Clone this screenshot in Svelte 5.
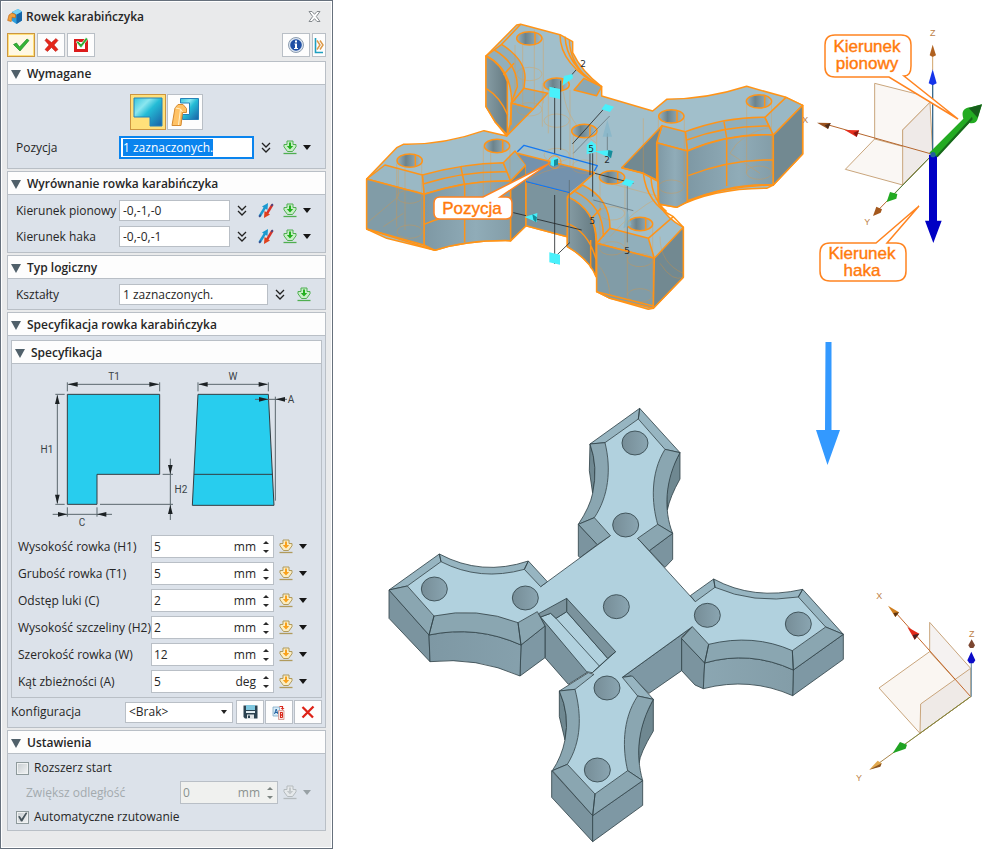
<script lang="ts">
	import { onMount } from 'svelte';

	let open = $state({ required: true, align: true, logic: true, spec: true, inner: true, settings: true });
	let position = $state('1 zaznaczonych.');
	let shapes = $state('1 zaznaczonych.');
	let directions = $state([
		{ id: 'vertical', label: 'Kierunek pionowy', value: '-0,-1,-0' },
		{ id: 'hook', label: 'Kierunek haka', value: '-0,-0,-1' }
	]);
	let params = $state([
		{ id: 'h1', label: 'Wysokość rowka (H1)', value: '5', unit: 'mm' },
		{ id: 't1', label: 'Grubość rowka (T1)', value: '5', unit: 'mm' },
		{ id: 'c', label: 'Odstęp luki (C)', value: '2', unit: 'mm' },
		{ id: 'h2', label: 'Wysokość szczeliny (H2)', value: '2', unit: 'mm' },
		{ id: 'w', label: 'Szerokość rowka (W)', value: '12', unit: 'mm' },
		{ id: 'a', label: 'Kąt zbieżności (A)', value: '5', unit: 'deg' }
	]);
	let extend = $state({ id: 'distance', label: 'Zwiększ odległość', value: '0', unit: 'mm' });
	let extendStart = $state(false);
	let autoProject = $state(true);
	let mode = $state('slot');

	const topHoles = [[88, 85], [170, 224], [253, 363], [336, 502], [420, 642], [514, 319], [777, 274], [-271, 452], [-9, 408]];
	const resultHoles = [[285, 129], [257, 375], [229, 620], [201, 864], [172, 1110], [502, 646], [775, 672], [-317, 567], [-44, 594]];

	let positionInput: HTMLInputElement;

	onMount(() => {
		positionInput.focus();
		positionInput.select();
	});

	function step(param: { value: string }, by: number) {
		param.value = String(Number(param.value) + by);
	}
</script>

{#snippet sectionHead(title: string, key: keyof typeof open)}
	<h2 class="section__head">
		<button type="button" class="section__toggle" aria-expanded={open[key]} onclick={() => (open[key] = !open[key])}>
			<svg class:closed={!open[key]} width="10" height="9" viewBox="0 0 10 9" aria-hidden="true"><path d="M0 0h10L5 9z" fill="#50606a" /></svg>
			{title}
		</button>
	</h2>
{/snippet}

{#snippet chevrons()}
	<button type="button" class="tool" aria-label="Więcej">
		<svg width="10" height="12" viewBox="0 0 10 12"><path d="M1 1l4 4 4-4M1 6l4 4 4-4" fill="none" stroke="#222" stroke-width="1.3" /></svg>
	</button>
{/snippet}

{#snippet swap()}
	<button type="button" class="tool" aria-label="Odwróć kierunek">
		<svg width="16" height="15" viewBox="0 0 16 15">
			<path d="M1.500 13.500L7 4.500" stroke="#1c9ad0" stroke-width="2.400" /><path d="M10 0l-.5 7-5.500-3.400z" fill="#1c9ad0" />
			<path d="M14.500 1.500L9 10.500" stroke="#d8332a" stroke-width="2.400" /><path d="M6 15l.5-7 5.500 3.400z" fill="#e0401c" />
			<path d="M1.200 14l1.500-2.300M14.800 1l-1.500 2.200" stroke="#3c4a8c" stroke-width="1.500" />
		</svg>
	</button>
{/snippet}

{#snippet pick(line: string, light: string, core: string, disabled = false)}
	<button type="button" class="tool" aria-label="Wstaw wartość" {disabled}>
		<svg width="14" height="15" viewBox="0 0 14 15">
			<path d="M4 1h6v3.500h3v2.300L9.500 11.500h-5L1 6.800V4.500h3z" fill={light} stroke={line} />
			<path d="M6 2.500h2V6h2.200L7 9.600 3.800 6H6z" fill={core} />
			<path d="M.5 13.500h13" stroke={line} stroke-width="1.300" />
		</svg>
	</button>
{/snippet}

{#snippet caret(fill = '#161616', disabled = false)}
	<button type="button" class="tool tool--caret" aria-label="Rozwiń" {disabled}>
		<svg width="8" height="5" viewBox="0 0 8 5"><path d="M0 0h8L4 5z" {fill} /></svg>
	</button>
{/snippet}

{#snippet spin(param: { id: string; value: string; unit: string }, disabled = false)}
	<span class="spin" class:spin--off={disabled}>
		<input id={param.id} type="text" inputmode="decimal" bind:value={param.value} {disabled} />
		<span class="spin__unit">{param.unit}</span>
		<span class="spin__arrows">
			<button type="button" aria-label="Zwiększ" {disabled} onclick={() => step(param, 1)}>
				<svg width="6" height="3" viewBox="0 0 6 3"><path d="M0 3h6L3 0z" fill="currentColor" /></svg>
			</button>
			<button type="button" aria-label="Zmniejsz" {disabled} onclick={() => step(param, -1)}>
				<svg width="6" height="3" viewBox="0 0 6 3"><path d="M0 0h6L3 3z" fill="currentColor" /></svg>
			</button>
		</span>
	</span>
{/snippet}

<main class="page">
	<form class="panel" onsubmit={(e) => e.preventDefault()}>
		<header class="title">
			<svg width="17" height="17" viewBox="0 0 17 17" aria-hidden="true">
				<path d="M5 4l6-3L15 3.500v9L9.500 16 5 13z" fill="#2d9fdc" />
				<path d="M9.500 6.500L15 3.500v9L9.500 16z" fill="#1766a8" />
				<path d="M5 4l6-3L15 3.500 9.500 6.500z" fill="#7bd3f4" />
				<path d="M.7 12.500L2 7l3-2 3.500 1.500v3.300L6 9.500 5 9l-.8 4.500z" fill="#f0a03c" stroke="#c46a14" stroke-width=".7" />
			</svg>
			<h1>Rowek karabińczyka</h1>
			<button type="button" class="title__close" aria-label="Zamknij">
				<svg width="13" height="11" viewBox="0 0 13 11"><path d="M1 .5h3l2.500 2.800L9 .5h3L8.300 5.500l3.700 5H9L6.500 7.700 4 10.500H1l3.700-5z" fill="#fff" stroke="#858a8e" /></svg>
			</button>
		</header>

		<div class="toolbar">
			<button type="submit" class="btn btn--active" aria-label="OK">
				<svg width="18" height="14" viewBox="0 0 18 14"><path d="M1.500 6.500l3-1.500 3 4L15 1l2 1.500L8 13z" fill="#35b536" stroke="#208a27" stroke-width=".7" /></svg>
			</button>
			<button type="button" class="btn" aria-label="Anuluj">
				<svg width="15" height="14" viewBox="0 0 15 14"><path d="M2.500.5l5 4 4.500-4L14 2.500 10 7l4 4.500-2.500 2-4-4-4 4L1 11.500 5 7 1 2.500z" fill="#e5271b" stroke="#b31610" stroke-width=".5" /></svg>
			</button>
			<button type="button" class="btn" aria-label="Zastosuj">
				<svg width="16" height="16" viewBox="0 0 16 16">
					<path d="M2.500 3.500h11v10h-11z" fill="#fff" stroke="#dc1c1c" stroke-width="3" />
					<path d="M3 5l2-1 3 3 5-6.500 2 1.500-7 9z" fill="#2fae35" stroke="#fff" stroke-width=".6" />
				</svg>
			</button>
			<button type="button" class="btn btn--info" aria-label="Informacje">
				<svg width="18" height="18" viewBox="0 0 18 18">
					<circle cx="9" cy="9" r="7.500" fill="#dce6f2" stroke="#8d9db0" />
					<circle cx="9" cy="9" r="5.800" fill="#1f4fa5" />
					<path d="M7.500 7.500H10v4.500h1v1H7v-1h1V8.500h-.500zM8 4.500h2v2H8z" fill="#fff" />
				</svg>
			</button>
			<button type="button" class="btn btn--narrow" aria-label="Podgląd">
				<svg width="10" height="17" viewBox="0 0 10 17">
					<path d="M1.500 1v14.500H9" fill="none" stroke="#1e9fc0" stroke-width="1.600" />
					<path d="M3 3.500l3 4.500-3 4.500M6 3.500L9 8l-3 4.500" fill="none" stroke="#dc9a4a" stroke-width="1.500" />
				</svg>
			</button>
		</div>

		<section class="section">
			{@render sectionHead('Wymagane', 'required')}
			{#if open.required}
				<div class="section__body section__body--required">
					<div class="modes">
						<button type="button" class="mode" class:mode--active={mode === 'slot'} aria-label="Rowek" onclick={() => (mode = 'slot')}>
							<svg width="30" height="30" viewBox="0 0 30 30">
								<defs><linearGradient id="block" x1="0" y1="0" x2="1" y2="1"><stop offset="0" stop-color="#35c5dc" /><stop offset=".3" stop-color="#8be6ef" /><stop offset=".5" stop-color="#24bcd6" /><stop offset="1" stop-color="#1a5fa5" /></linearGradient></defs>
								<path d="M1 1h28v28H17v-9H1z" fill="url(#block)" stroke="#2682b8" />
							</svg>
						</button>
						<button type="button" class="mode" class:mode--active={mode === 'hook'} aria-label="Hak" onclick={() => (mode = 'hook')}>
							<svg width="30" height="30" viewBox="0 0 30 30">
								<path d="M10.500 1.500h18v21H12.500v-5h7V6h-9z" fill="url(#block)" stroke="#2682b8" />
								<path d="M2 28.500L5 11l3-3.500h5l3.500 4v4h-4L11 28.500z" fill="#ffc265" stroke="#d58a30" />
								<path d="M5.500 11l5 1 2 3M10.500 12L8.500 28" fill="none" stroke="#fff0c8" />
							</svg>
						</button>
					</div>
					<div class="row row--tall">
						<label for="position">Pozycja</label>
						<input id="position" type="text" bind:value={position} bind:this={positionInput} />
						{@render chevrons()}
						{@render pick('#4fae50', '#c9efc8', '#23b01e')}
						{@render caret()}
					</div>
				</div>
			{/if}
		</section>

		<section class="section">
			{@render sectionHead('Wyrównanie rowka karabińczyka', 'align')}
			{#if open.align}
				<div class="section__body section__body--align">
					{#each directions as dir (dir.id)}
						<div class="row">
							<label for={dir.id}>{dir.label}</label>
							<input id={dir.id} type="text" bind:value={dir.value} />
							{@render chevrons()}
							{@render swap()}
							{@render pick('#4fae50', '#c9efc8', '#23b01e')}
							{@render caret()}
						</div>
					{/each}
				</div>
			{/if}
		</section>

		<section class="section">
			{@render sectionHead('Typ logiczny', 'logic')}
			{#if open.logic}
				<div class="section__body section__body--logic">
					<div class="row row--wide">
						<label for="shapes">Kształty</label>
						<input id="shapes" type="text" bind:value={shapes} />
						{@render chevrons()}
						{@render pick('#4fae50', '#c9efc8', '#23b01e')}
					</div>
				</div>
			{/if}
		</section>

		<section class="section">
			{@render sectionHead('Specyfikacja rowka karabińczyka', 'spec')}
			{#if open.spec}
				<div class="section__body section__body--spec">
					<section class="section section--inner">
						{@render sectionHead('Specyfikacja', 'inner')}
						{#if open.inner}
							<div class="section__body section__body--params">
								<svg class="diagram" viewBox="12 364 309 171" role="img" aria-label="Wymiary rowka">
									<g transform="translate(0 340) scale(.33333)" stroke="#333b40" stroke-width="3">
										<path d="M202 163H479V403H291V493H202z" fill="#28cdee" />
										<path d="M594 163H805L822 496H577zM582 403H818" fill="#28cdee" />
										<path d="M202 127V154M479 127V154M205 133H476M166 163H194M166 493H194M172 166V490M202 502V530M291 502V530M158 523H336M300 493H519M488 403H519M511 356V540M594 127V154M805 127V154M597 133H802M765 178H861M826 170V482" fill="none" stroke="#59656b" />
										<path d="M203 133l30-7v14zM478 133l-30-7v14zM172 164l-7 28h14zM172 492l-7-28h14zM202 523l-28-7v14zM291 523l28-7v14zM511 403l-7-28h14zM511 494l-7 28h14zM595 133l28-7v14zM804 133l-28-7v14zM805 178l-28-7v14zM827 178l28-7v14z" fill="#1c2124" stroke="none" />
									</g>
									<g class="diagram__text">
										<text x="114" y="380">T1</text>
										<text x="233" y="380">W</text>
										<text x="291" y="403">A</text>
										<text x="47" y="453">H1</text>
										<text x="181" y="493">H2</text>
										<text x="82" y="526">C</text>
									</g>
								</svg>
								{#each params as param (param.id)}
									<div class="row row--param">
										<label for={param.id}>{param.label}</label>
										{@render spin(param)}
										{@render pick('#b09a5c', '#fbeec4', '#f9a11b')}
										{@render caret()}
									</div>
								{/each}
							</div>
						{/if}
					</section>
					<div class="config">
						<label for="config">Konfiguracja</label>
						<span class="select">
							<select id="config"><option>&lt;Brak&gt;</option></select>
							<svg width="6" height="4" viewBox="0 0 6 4" aria-hidden="true"><path d="M0 0h6L3 4z" fill="#222" /></svg>
						</span>
						<button type="button" class="btn" aria-label="Zapisz">
							<svg width="15" height="14" viewBox="0 0 15 14">
								<path d="M.5.5h14v13H2L.5 12z" fill="#2c4250" /><path d="M3 0h9v5H3z" fill="#7fc8e0" /><path d="M3 6h9v2H3z" fill="#e4eef2" /><path d="M4 9.500h7V14H4z" fill="#dfe4e6" /><path d="M5 10.500h2V13H5z" fill="#2c4250" />
							</svg>
						</button>
						<button type="button" class="btn" aria-label="Zmień nazwę">
							<svg width="14" height="15" viewBox="0 0 14 15">
								<path d="M1 2h6.500v9H1z" fill="#d8ecf8" stroke="#7ea8c4" stroke-width=".8" /><path d="M2.500 9l1.700-5 1.700 5M3 7.500h2.500" fill="none" stroke="#2462a0" />
								<path d="M6.500 5.500H12v9H6.500z" fill="#fbe4e0" stroke="#d29088" stroke-width=".8" /><path d="M8.500 7v6M8.500 7.500h2v2.500h-2M8.500 10h2v2.500h-2" fill="none" stroke="#d8281c" />
								<path d="M7.500 1.500h3v2" fill="none" stroke="#d8281c" stroke-width="1.200" /><path d="M8.500 3h4l-2 2z" fill="#d8281c" />
							</svg>
						</button>
						<button type="button" class="btn" aria-label="Usuń">
							<svg width="14" height="14" viewBox="0 0 14 14"><path d="M1.500 2L12 12.500M12.500 1.500l-11 11" stroke="#dd2217" stroke-width="2.300" /></svg>
						</button>
					</div>
				</div>
			{/if}
		</section>

		<section class="section">
			{@render sectionHead('Ustawienia', 'settings')}
			{#if open.settings}
				<div class="section__body section__body--settings">
					<label class="check"><input type="checkbox" bind:checked={extendStart} />Rozszerz start</label>
					<div class="row row--extend">
						<label for="distance">{extend.label}</label>
						{@render spin(extend, true)}
						{@render pick('#b4babd', '#e6e9eb', '#c3c8ca', true)}
						{@render caret('#98a1a5', true)}
					</div>
					<label class="check"><input type="checkbox" bind:checked={autoProject} />Automatyczne rzutowanie</label>
				</div>
			{/if}
		</section>
	</form>

	<svg class="scene" viewBox="333 0 667 849" role="img" aria-label="Rowek karabińczyka przed i po operacji">
		<defs>
			<linearGradient id="hole-top"><stop offset="0" stop-color="#9ab3bf" /><stop offset=".35" stop-color="#6c838c" /><stop offset="1" stop-color="#a2bcc8" /></linearGradient>
			<linearGradient id="hole"><stop offset="0" stop-color="#768d97" /><stop offset="1" stop-color="#8aa5b1" /></linearGradient>
			<linearGradient id="wall"><stop offset="0" stop-color="#7e98a4" /><stop offset=".6" stop-color="#90acb8" /><stop offset="1" stop-color="#839da8" /></linearGradient>
			<linearGradient id="wall-dark"><stop offset="0" stop-color="#869ca4" /><stop offset="1" stop-color="#667b82" /></linearGradient>
		</defs>

		<!-- part before the cut, highlighted -->
		<g transform="translate(500 10) scale(.33333)" stroke="#ff9418" stroke-width="4.500" stroke-linejoin="round" fill="none">
			<path fill="#a1bfcb" d="M50 45L62 43 180 74 218 95V128Q245 185 305 230V258L458 303 500 268Q620 268 740 229L858 262 908 286V432L820 525 800 535Q640 535 530 592L478 583Q500 625 550 652V802L460 895 445 898 330 865 290 845V800Q270 750 202 710V680L78 647 32 692Q-100 690-195 721L-340 685-400 657V507L-310 413-290 403Q-170 405-48 362L20 378-15 335-42 290V138z" />
			<g fill="#91afbb">
				<path d="M-42 138L5 103Q77 150 75 205L72 235 35 280Q35 175-42 138z" />
				<path d="M72 235L143 250 100 297 35 280z" />
				<path fill="#86a2ad" d="M35 280L100 297 20 378 30 345z" />
				<path fill="#8ba8b4" d="M222 240L252 205 305 230 290 257z" />
				<path d="M556 365Q680 320 795 322L820 375Q680 370 562 423z" />
				<path d="M470 398L486 347 556 365 562 423z" />
				<path d="M-233 495Q-110 460 10 458L32 513Q-100 510-228 553z" />
				<path fill="#9ab8c4" d="M-400 507L-345 465-233 495-228 553z" />
				<path d="M10 458L45 423 78 465 32 513z" />
				<path d="M248 525Q330 565 330 655L290 700Q290 600 202 560z" />
				<path d="M330 655L445 685 463 745 290 700z" />
				<path d="M820 375L795 322 858 262 908 286z" fill="#9ab8c4" />
			</g>
			<path fill="url(#wall-dark)" d="M-42 138Q5 160 22 215V375L-15 335-42 290z" />
			<g fill="url(#wall)">
				<path d="M562 423Q690 370 820 375V525Q690 520 562 575z" />
				<path d="M470 398L562 423V575L530 592 476 582z" />
				<path d="M-228 553Q-100 510 32 513V692Q-100 690-195 721L-228 705z" />
				<path fill="#819ca7" d="M-400 507L-228 553V705L-400 657z" />
				<path fill="#819ca7" d="M290 700L463 745 460 895 330 865 290 845z" />
			</g>
			<g fill="#728991">
				<path d="M908 286V432L820 525V375z" />
				<path d="M365 473L486 347 470 398V510L430 490z" />
				<path d="M32 513L78 465V647L32 692z" />
				<path d="M78 515L208 548 202 680 78 647z" fill="#7b949e" />
				<path d="M463 745L550 652V802L460 895z" />
				<path fill="url(#wall-dark)" d="M202 560Q290 600 288 700V800Q270 750 202 710z" />
				<path d="M52 430L285 488 208 548 78 515V465z" fill="#7492ad" stroke="none" />
			</g>
			<path d="M62 43L5 103M-17 120Q52 160 52 230L33 280V345M10 195L42 160M-42 235Q0 260 23 315M180 74Q180 165 305 230M195 80Q200 165 290 222M208 90Q210 160 270 210M560 390Q680 345 808 348M565 497Q690 448 820 450M672 335L680 384V528M562 572Q680 528 820 525M-231 522Q-110 483 20 485M-228 643Q-120 598 32 598M-118 468L-106 525V697M-400 657L-195 721M226 545Q312 590 310 680M202 640Q265 665 288 748M272 690V775M303 595L275 625M202 560L285 488M52 430L285 488M365 473L430 490 475 515M430 490Q440 580 520 620L445 685M453 500Q455 565 500 605M475 515V580M520 620L550 652M290 845L460 888" />
			<g stroke-width="2" opacity=".42">
				<path d="M45 105V285M68 65V290M103 60V290M127 220V350M130 85V280M145 225V370M210 240V470M220 370V470M290 370V500M475 325V530M553 325V530M740 275V490M815 275V490M-310 460V650M-285 475V660M-235 460V650M-50 410V570M-28 410V600M30 410V570M300 505V715M375 505V715M382 645V860M458 645V860M-400 640L-305 560V480M-290 610L-350 650M190 245Q200 340 290 400M330 520L480 560M430 325V490M690 430Q720 370 815 350M690 430L780 490M330 680Q400 600 480 560M480 760Q520 820 550 800M480 680Q480 760 550 790M200 470Q120 480 80 515M290 760Q330 800 330 865" />
				<ellipse cx="88" cy="192" rx="38" ry="20" /><ellipse cx="88" cy="298" rx="38" ry="20" /><ellipse cx="170" cy="332" rx="38" ry="20" />
				<ellipse cx="170" cy="435" rx="38" ry="20" /><ellipse cx="253" cy="470" rx="38" ry="20" /><ellipse cx="514" cy="530" rx="38" ry="20" />
				<ellipse cx="777" cy="488" rx="38" ry="20" /><ellipse cx="-271" cy="560" rx="38" ry="20" /><ellipse cx="-271" cy="665" rx="38" ry="20" />
				<ellipse cx="336" cy="610" rx="38" ry="20" /><ellipse cx="336" cy="715" rx="38" ry="20" /><ellipse cx="420" cy="750" rx="38" ry="20" /><ellipse cx="420" cy="856" rx="38" ry="20" />
			</g>
			{#each topHoles as [cx, cy]}
				<ellipse {cx} {cy} rx="38" ry="20" fill="url(#hole-top)" />
				<path d="M{cx + 17} {cy - 18}v36" />
			{/each}
			<circle cx="164" cy="456" r="19" stroke-width="2.500" />
			<path d="M52 425L72 406 292 467 283 483M78 515L208 548" stroke="#1478f0" stroke-width="4" />
			<g stroke="#23282a" stroke-width="2.500">
				<path d="M164 232V430M164 555V762M182 212V420M322 285L217 402M228 180L195 217M100 625L245 660M270 430V495M278 430V560M285 490L400 520M150 755L210 697M40 608L78 617" />
				<path d="M329 318L220 430M280 570L400 602M208 510V700M382 520V697M322 370V425" stroke="#5c686c" stroke-width="2" />
			</g>
			<g fill="#49f0fb" stroke="none">
				<path d="M148 230l32 7v30l-32-7zM316 282l26 8-12 16-26-8zM148 727l32 7v30l-32-7zM377 506l26 8-12 16-26-8zM152 450l14-8 8 4v18l-14 5-8-4z" />
				<path d="M187 227l5-29 25-6 2 12zM74 621l38-12-2 28zM260 405l14-12 14 12v20l-28 8zM284 424l50-4-2 24z" />
				<path d="M322 330l14 50h-28zM382 600l12 45-24 10z" fill="#83b5c9" opacity=".7" />
				<path d="M162 450l12-4v18l-12 5zM325 420l13 3-5 22-10-9zM97 612l14 10-3 15-8-8z" fill="#168c9a" />
			</g>
			<g class="dim">
				<text x="249" y="171">2</text><text x="273" y="427">5</text><text x="321" y="459">2</text><text x="277" y="641">5</text><text x="381" y="731">5</text>
			</g>
		</g>

		<!-- part after the cut -->
		<g transform="translate(540 400) scale(.33333)" stroke="#33444b" stroke-width="2.500" stroke-linejoin="round">
			<g fill="#6f8891">
				<path d="M150 132L148 212 158 280Q175 200 150 132zM420 158V237Q390 290 382 330 370 240 420 158zM58 873V950L75 1020Q90 945 58 873zM340 898V993Q300 1060 297 1090 285 990 340 898z" />
			</g>
			<g fill="#7b949f">
				<path d="M115 373L172 434 120 473 115 468zM398 400V478L375 502 328 452z" />
				<path d="M455 682L425 712V812L327 880 272 828 247 832z" fill="#7e98a4" />
				<path d="M15 678V773L85 853 145 815 0 650z" />
				<path d="M-453 570V655L-330 785-333 705zM35 1112V1192L158 1325V1247zM494 789L425 716V812L465 855 490 866z" />
				<path d="M910 703V778L758 887 760 810zM308 1142V1216L158 1325V1247zM-57 735L15 678V773L-60 828z" fill="#7e98a4" />
				<path d="M760 810Q630 750 494 789L490 866Q630 830 758 887zM-333 705Q-190 675-57 735L-60 828Q-190 770-330 785z" fill="url(#wall)" />
			</g>
			<path fill="#b1d1de" stroke="none" d="M295 57L375 148C330 220 335 310 353 373L293 415 466 605 525 562Q640 612 775 591L857 681 757 752Q640 710 506 733L457 680 247 832 293 888C245 960 248 1050 263 1112L165 1182 82 1093C125 1025 125 945 105 868L162 823 85 740-8 635-66 668Q-190 620-318 648L-398 558-297 485Q-180 545-47 508L2 560 211 407 163 353C205 290 215 210 195 128z" />
			<path fill="none" d="M2 560L211 407M293 415L466 605M457 680L247 832" />
			<g fill="#97b5c1">
				<path d="M299 25L150 132 195 128 295 57zM299 25L420 158 375 148 295 57z" />
				<path d="M451 587L521 537 525 562 466 605zM521 537Q640 602 788 568L775 591Q640 612 525 562zM788 568L910 703 857 681 775 591z" />
				<path d="M58 873L145 818 162 823 105 868zM247 832L277 828 340 898 293 888z" />
				<path d="M-453 570L-302 462-297 485-398 558zM-302 462Q-175 530-35 483L-47 508Q-180 545-297 485zM-35 483L22 545 2 560-47 508z" />
			</g>
			<g fill="#8aa6b1">
				<path d="M150 132L195 128C215 210 205 290 163 353L115 373Q150 320 158 280 175 200 150 132zM375 148C330 220 335 310 353 373L398 400C370 330 375 240 420 158z" />
				<path d="M115 373L163 353 211 407 172 434zM353 373L398 400 328 452 293 415z" />
				<path d="M910 703L857 681 757 752 760 810zM757 752Q640 700 506 733L494 789Q630 750 760 810zM506 733L457 680 425 716 494 789z" />
				<path d="M58 873Q90 945 75 1020 65 1070 37 1112L82 1093C125 1025 125 945 105 868zM293 888C245 960 248 1050 263 1112L308 1142C285 1060 295 980 340 898z" />
				<path d="M37 1112L82 1093 165 1182 158 1247zM165 1182L263 1112 308 1142 158 1247z" />
				<path d="M-453 570L-398 558-318 648-333 705zM-318 648Q-190 620-66 668L-57 735Q-190 675-333 705zM-66 668L-8 635 15 678-57 735z" />
			</g>
			<path d="M2 651L32 640 48 655 80 635 203 775 157 818 140 815z" fill="#b1d1de" />
			<path d="M80 595L227 755 203 775 80 635z" fill="#7b939d" />
			<path d="M-4 641L80 595V635L48 655 32 640 2 651z" fill="#7b939d" />
			<path d="M48 655L178 798M227 755L157 818" fill="none" />
			{#each resultHoles as [cx, cy]}
				<ellipse {cx} {cy} rx="39" ry="36" fill="url(#hole)" />
			{/each}
		</g>

		<!-- flow arrow -->
		<path d="M825.500 342h6v88h8.500L827.500 465 816 430h9z" fill="#3399ff" />

		<!-- triad with the picked directions -->
		<g transform="translate(800 20) scale(.33333)">
			<g fill="#faf7f4" stroke="#c9a57b" stroke-width="3">
				<path d="M224 190L390 232V247L308 330V410L224 357z" />
				<path d="M224 357L136 448 308 495 398 403z" />
				<path d="M390 247L308 330V495L398 403z" fill="#efeae8" />
			</g>
			<path d="M75 312L398 403M398 403L230 575" stroke="#b5652c" stroke-width="3" />
			<path d="M398 403L275 530" stroke="#4f8a48" stroke-width="3" />
			<path d="M398 110V150" stroke="#d2a469" stroke-width="3" />
			<path d="M398 190V403" stroke="#3a6a8c" stroke-width="4" />
			<path d="M51 308l41 1-8 18z" fill="#9c5420" /><path d="M92 309l-8 18-10-11z" fill="#4e2e1c" />
			<path d="M134 330l43 1-7 20z" fill="#e52d1c" /><path d="M177 331l-7 20-10-12z" fill="#8c1410" />
			<path d="M398 74l10 32-10 5-9-5z" fill="#b0611f" /><path d="M398 148l12 42-12 6-12-6z" fill="#1434ea" />
			<path d="M260 546l10-30 22 6-3 14z" fill="#22aa22" /><path d="M219 588l10-28 17 8-4 10z" fill="#a4581d" />
			<path d="M387 404h24v198h14l-25 67-25-67h12z" fill="#0000c4" />
			<path d="M388 398L490 296q-10-32 22-34l34-9-12 40q-4 20-26 16L412 410z" fill="#23ab22" />
			<path d="M506 264l40-11-13 40z" fill="#165f1b" /><path d="M408 408L516 290l2 8L413 412z" fill="#17681b" />
			<circle cx="399" cy="404" r="8" fill="#20629c" />
			<g class="axis"><text x="398" y="48">Z</text><text x="16" y="308">X</text><text x="202" y="616">Y</text></g>
		</g>

		<!-- world triad -->
		<g transform="translate(800 330) scale(.33333)">
			<g fill="#faf6f2" stroke="#c9a57b" stroke-width="3">
				<path d="M389 877L512 1015V1100L389 965z" fill="#f5f2f1" />
				<path d="M389 965L237 1074 360 1210 512 1100z" />
				<path d="M512 1015L362 1122 360 1210 512 1100z" fill="#efeae7" />
			</g>
			<path d="M512 1100L280 840" stroke="#c4672a" stroke-width="3" /><path d="M512 1100L225 1308" stroke="#a8854a" stroke-width="3" />
			<path d="M512 1100L300 1253" stroke="#6d8a3a" stroke-width="2" /><path d="M514 1100V990" stroke="#7e9db0" stroke-width="4" />
			<path d="M264 827l33 20-11 14z" fill="#d07f1f" /><path d="M297 847l-11 14-6-12z" fill="#5e3410" />
			<path d="M322 891l36 20-14 18z" fill="#e3281a" /><path d="M358 911l-14 18-6-14z" fill="#4c2222" />
			<path d="M515 928l10 18-5 8h-10l-5-8z" fill="#7c4630" /><path d="M514 965l12 26-6 9h-12l-6-9z" fill="#0c0cc8" />
			<path d="M278 1270l22-34 21 8-4 12z" fill="#20a322" /><path d="M208 1319l25-27 12 8-4 8z" fill="#e2a94e" /><path d="M208 1319l37-19-4 10z" fill="#8a5422" />
			<g class="axis"><text x="238" y="808">X</text><text x="515" y="920">Z</text><text x="177" y="1352">Y</text></g>
		</g>

		<g class="callout">
			<path d="M439 197H483L550 163 500 197H506Q512 197 512 203V213Q512 219 506 219H440Q434 219 434 213V203Q434 197 440 197z" />
			<path d="M835 35H901Q911 35 911 45V66Q911 76 904 76L958 119 889 77H835Q825 77 825 67V45Q825 35 835 35z" />
			<path d="M830 243H876L919 206 887 243H896Q906 243 906 253V271Q906 281 896 281H830Q820 281 820 271V253Q820 243 830 243z" />
			<text x="472" y="214">Pozycja</text>
			<text x="867" y="52">Kierunek</text>
			<text x="867" y="69">pionowy</text>
			<text x="862" y="259">Kierunek</text>
			<text x="862" y="276">haka</text>
		</g>
	</svg>
</main>

<style>
:global(body) { background: #fff; }

.page {
	display: grid;
	grid-template-columns: 333px 1fr;
	align-items: start;
	min-height: 100vh;
	font: 12px/16px "Open Sans", "Noto Sans", sans-serif;
	color: #262626;
}

button, input, select { font: inherit; color: inherit; }
button { padding: 0; }

.panel {
	display: flex;
	flex-direction: column;
	gap: 2px;
	box-sizing: border-box;
	min-height: 100vh;
	padding: 1px 6px 16px;
	border: 1px solid #66707c;
	background: #e9eaeb;
	box-shadow: inset 0 0 0 1px #fff;
}

.title {
	display: flex;
	align-items: center;
	gap: 2px;
	height: 29px;
}
.title h1 { flex: 1; margin: 0; font-size: 12px; font-weight: 600; }
.title__close { display: flex; padding: 0 5px; border: 0; background: none; }

.toolbar { display: flex; gap: 2px; margin-bottom: 2px; }

.btn {
	display: flex;
	align-items: center;
	justify-content: center;
	box-sizing: border-box;
	width: 28px;
	height: 24px;
	border: 1px solid #b9bfc6;
	background: #fdfdfd;
}
.btn--active { border: 1px solid #cc9640; background: #fff8e4; box-shadow: inset 0 0 0 1px #ffe07a; }
.btn--info { margin-left: auto; }
.btn--narrow { width: 14px; }

.section { border: 1px solid #b9bfc6; background: #dce2ea; }
.section__head { margin: 0; border-bottom: 1px solid #b9bfc6; background: #fdfdfd; font-size: 12px; }
.section__toggle {
	display: flex;
	align-items: center;
	gap: 6px;
	width: 100%;
	height: 22px;
	padding: 2px 3px 0;
	border: 0;
	background: none;
	font-weight: 600;
	text-align: left;
}
.closed { transform: rotate(-90deg); }

.section__body { display: flex; flex-direction: column; }
.section__body--required { gap: 6px; padding: 9px 0; }
.section__body--align { gap: 5px; padding: 5px 0; }
.section__body--logic { padding: 5px 0 4px; }
.section__body--spec { gap: 2px; padding: 4px 3px 3px; }
.section__body--params { gap: 4px; padding-bottom: 4px; }
.section__body--settings { gap: 6px; padding: 7px 0 6px; }

.modes { display: flex; gap: 1px; padding-left: 122px; }
.mode {
	display: flex;
	align-items: center;
	justify-content: center;
	box-sizing: border-box;
	width: 36px;
	height: 36px;
	border: 1px solid #b9bfc6;
	background: #fdfdfd;
}
.mode--active { border-color: #cc9640; background: #ffe07a; }

.row { display: flex; align-items: center; height: 21px; padding: 0 13px 0 8px; }
.row label { flex: 0 0 103px; white-space: nowrap; }
.row > input {
	flex: 1;
	min-width: 0;
	height: 100%;
	box-sizing: border-box;
	padding: 0 3px;
	border: 1px solid #b9bfc6;
	background: #fff;
}
.row--tall { height: 23px; }
.row--wide { padding-right: 9px; }
.row--param { height: 23px; padding-left: 6px; }
.row--param label { flex-basis: 133px; min-width: 0; }
.row--extend { height: 23px; padding-left: 18px; color: #a3aaae; }
.row--extend label { flex-basis: 154px; }
.row > input:focus { outline: 1px solid #0a84ee; outline-offset: -2px; border-color: #0a84ee; }
.row > input::selection { background: #0a84ee; color: #fff; }

.tool {
	display: flex;
	flex: 0 0 24px;
	align-items: center;
	justify-content: center;
	height: 20px;
	border: 0;
	background: none;
}
.tool--caret { flex-basis: 10px; }

.spin {
	display: flex;
	flex: 1;
	align-items: center;
	box-sizing: border-box;
	min-width: 0;
	height: 23px;
	border: 1px solid #b9bfc6;
	background: #fff;
}
.spin input { flex: 1; min-width: 0; padding: 0 2px; border: 0; background: none; outline: 0; }
.spin__arrows { display: flex; flex-direction: column; gap: 6px; width: 15px; padding-left: 2px; }
.spin__arrows button { display: flex; justify-content: center; border: 0; background: none; color: #2a2a2a; }
.spin--off { background: #f0f1ef; color: #8b918f; }
.spin--off .spin__arrows button { color: #7d8582; }

.diagram { display: block; width: 100%; margin-bottom: -4px; }
.diagram__text { font: 10px "Roboto", sans-serif; fill: #3a4247; text-anchor: middle; }

.config { display: flex; align-items: center; gap: 1px; }
.config label { flex: 0 0 113px; }
.select { position: relative; flex: 1; min-width: 0; height: 21px; margin-right: 2px; }
.select select {
	appearance: none;
	box-sizing: border-box;
	width: 100%;
	height: 100%;
	padding: 0 3px;
	border: 1px solid #b9bfc6;
	border-radius: 0;
	background: #fff;
}
.select svg { position: absolute; top: 8px; right: 6px; pointer-events: none; }

.check { display: flex; align-items: center; gap: 5px; height: 14px; padding-left: 8px; }
.check input {
	appearance: none;
	box-sizing: border-box;
	width: 13px;
	height: 13px;
	margin: 0;
	border: 1px solid #8e9a9c;
	background: linear-gradient(135deg, #c6ccd0, #f2f4f5);
	box-shadow: inset 0 0 0 1px #f0f2f3;
}
.check input:checked::before {
	content: '';
	display: block;
	height: 11px;
	background: #46545c;
	clip-path: polygon(10% 45%, 25% 40%, 42% 65%, 80% 8%, 95% 12%, 48% 92%, 36% 92%);
}

.scene { display: block; width: 100%; }
.dim { font: 27px "DejaVu Sans", sans-serif; fill: #262b2e; stroke: none; text-anchor: middle; }
.axis { font: 27px "Liberation Sans", sans-serif; fill: #bd7f47; text-anchor: middle; }
.callout { font: 17px "Liberation Sans", sans-serif; text-anchor: middle; }
.callout path { fill: #fff; stroke: #ff8420; stroke-width: 1.5; }
.callout text { fill: #ff7a0c; stroke: #ff7a0c; stroke-width: .4; }
</style>
